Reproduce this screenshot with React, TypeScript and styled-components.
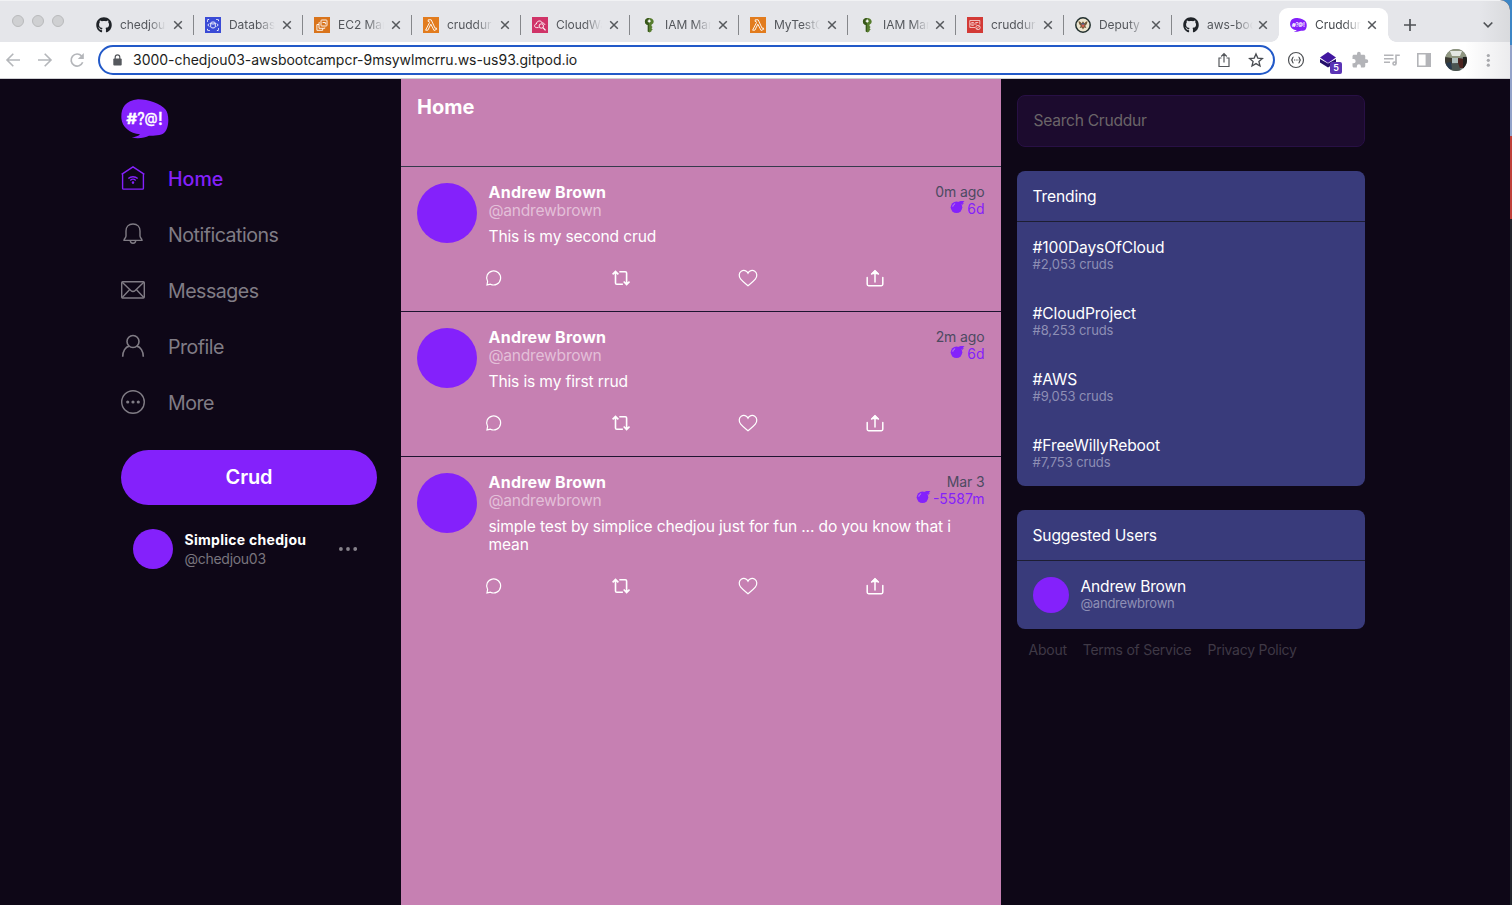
import React from "react";
import styled, { createGlobalStyle } from "styled-components";
import { FaGithub } from "react-icons/fa";

const purple = "#8421fb";

const GlobalStyle = createGlobalStyle`
  * { box-sizing: border-box; }
  html, body { margin: 0; padding: 0; }
  body {
    height: 905px;
    overflow: hidden;
    background: linear-gradient(#3c86c6 0 45px, #93a3c9 45px 136px, #c0413b 136px 219px, #23252d 219px);
    font-family: Inter, "Liberation Sans", sans-serif;
  }
  svg { display: block; flex: none; }
`;

const Window = styled.div`
  width: 1510px;
  height: 905px;
  display: flex;
  flex-direction: column;
  overflow: hidden;
  border-radius: 0 10px 0 0;
  background: #0e0717;
`;

/* ---------- browser chrome ---------- */

const TabStrip = styled.header`
  height: 42px;
  flex: none;
  display: flex;
  align-items: flex-end;
  border-top: 1px solid #f1f2f4;
  background: linear-gradient(90deg, #e5e6ea 1480px, #d9dadd 1510px);
`;

const Lights = styled.div`
  display: flex;
  gap: 8px;
  width: 85px;
  height: 41px;
  padding: 14px 0 0 12px;
`;

const Light = styled.span`
  width: 12px;
  height: 12px;
  border-radius: 50%;
  background: #cfd0d2;
  border: 1px solid #b9babc;
`;

const Tab = styled.div<{ $w: number; $active?: boolean; $sep?: boolean }>`
  position: relative;
  width: ${(p) => p.$w}px;
  height: 34px;
  padding: 0 11px;
  display: flex;
  align-items: center;
  color: ${(p) => (p.$active ? "#45494d" : "#54575c")};
  background: ${(p) => (p.$active ? "#fff" : "transparent")};
  border-radius: 9px 9px 0 0;

  &::after {
    content: "";
    display: ${(p) => (p.$sep ? "block" : "none")};
    position: absolute;
    right: 0;
    top: 7px;
    width: 1px;
    height: 20px;
    background: #85878b;
  }
`;

const TabFoot = styled.span<{ $side: "left" | "right" }>`
  position: absolute;
  bottom: 0;
  ${(p) => p.$side}: -8px;
  width: 8px;
  height: 8px;
  background: radial-gradient(circle at ${(p) => (p.$side === "left" ? "0 0" : "100% 0")}, transparent 7.5px, #fff 8px);
`;

const TabTitle = styled.span`
  width: 46px;
  margin: 0 auto 0 8px;
  white-space: nowrap;
  font-size: 12px;
  line-height: 18px;
  letter-spacing: -0.05px;
  mask-image: linear-gradient(90deg, #000 62%, transparent 100%);
`;

const StripButton = styled.span<{ $w: number }>`
  width: ${(p) => p.$w}px;
  height: 34px;
  display: flex;
  align-items: center;
  justify-content: center;
`;

const Spacer = styled.span`
  flex: 1;
`;

const Toolbar = styled.div`
  height: 37px;
  flex: none;
  display: flex;
  align-items: center;
  border-bottom: 1px solid #cfcfd3;
  background: linear-gradient(90deg, #fff 1465px, #ececee 1510px);
`;

const NavButtons = styled.div`
  width: 98px;
  padding-left: 5px;
  display: flex;
  gap: 16px;
`;

const Omnibox = styled.div`
  width: 1177px;
  height: 30px;
  padding: 0 9px 0 12.5px;
  display: flex;
  align-items: center;
  border: 2px solid #2259c8;
  border-radius: 15px;
  background: #fff;
`;

const Url = styled.span`
  margin-left: 11.5px;
  flex: 1;
  font-size: 14px;
  line-height: 20px;
  letter-spacing: -0.02px;
  color: #1d1e21;
`;

const OmniActions = styled.div`
  display: flex;
  gap: 16px;
`;

const Extensions = styled.div`
  margin-left: 12px;
  display: flex;
  align-items: center;
  gap: 14px;
`;

const Slot = styled.span`
  position: relative;
  width: 18px;
  height: 22px;
  display: flex;
  align-items: center;
  justify-content: center;
`;

const Count = styled.span`
  position: absolute;
  left: 11px;
  top: 13px;
  width: 12px;
  height: 12px;
  border-radius: 2px;
  background: #5b34b5;
  color: #fff;
  font-size: 9px;
  font-weight: 600;
  line-height: 12px;
  text-align: center;
`;

/* ---------- page ---------- */

const Page = styled.div`
  flex: 1;
  min-height: 0;
  display: flex;
`;

const Sidebar = styled.nav`
  width: 401px;
  padding: 20px 24px 0 121px;
`;

const NavList = styled.div`
  margin-top: 11px;
  display: flex;
  flex-direction: column;
`;

const NavItem = styled.a<{ $active?: boolean }>`
  height: 56px;
  display: flex;
  align-items: center;
  gap: 23px;
  color: ${(p) => (p.$active ? purple : "#807c85")};
`;

const NavLabel = styled.span<{ $active?: boolean }>`
  font-size: 19.6px;
  line-height: 24px;
  font-weight: ${(p) => (p.$active ? 500 : 400)};
  letter-spacing: ${(p) => (p.$active ? 0 : -0.5)}px;
  padding-top: 1px;
`;

const CrudButton = styled.button`
  display: block;
  width: 256px;
  height: 55px;
  margin-top: 20px;
  padding: 0;
  border: 0;
  border-radius: 28px;
  background: ${purple};
  color: #fff;
  font: 600 20px/55px Inter, sans-serif;
  letter-spacing: -0.15px;
`;

const Account = styled.div`
  margin-top: 24px;
  padding: 0 20px 0 12px;
  display: flex;
  align-items: center;
`;

const Avatar = styled.span<{ $size: number }>`
  flex: none;
  width: ${(p) => p.$size}px;
  height: ${(p) => p.$size}px;
  border-radius: 50%;
  background: ${purple};
`;

const AccountText = styled.div`
  flex: 1;
  margin-left: 11.5px;
  font-size: 14px;
  line-height: 19px;
`;

const AccountName = styled.div`
  font-weight: 700;
  letter-spacing: 0.28px;
  color: #fff;
`;

const AccountHandle = styled.div`
  letter-spacing: -0.28px;
  color: #79757e;
`;

const Feed = styled.main`
  width: 600px;
  background: #c680b2;
`;

const FeedHeader = styled.div`
  height: 88px;
  padding: 16px;
  border-bottom: 1px solid #343a4b;
  font-size: 20px;
  line-height: 24px;
  font-weight: 700;
  color: #fff;
`;

const Crud = styled.article<{ $last?: boolean }>`
  padding: 16px 16px 24px;
  display: flex;
  gap: 11.5px;
  border-bottom: ${(p) => (p.$last ? "0" : "1px solid #1d1430")};
`;

const CrudBody = styled.div`
  flex: 1;
  min-width: 0;
`;

const CrudHead = styled.div`
  display: flex;
  justify-content: space-between;
`;

const CrudName = styled.div`
  font-size: 16px;
  line-height: 18px;
  font-weight: 700;
  letter-spacing: 0.25px;
  color: #fff;
`;

const CrudHandle = styled.div`
  padding-top: 1px;
  font-size: 15.6px;
  line-height: 18px;
  letter-spacing: -0.24px;
  color: #e3bfd8;
`;

const Times = styled.div`
  display: flex;
  flex-direction: column;
  align-items: flex-end;
  padding-right: 0.5px;
  font-size: 14px;
  line-height: 17px;
  color: #4c4a61;
`;

const Ago = styled.span`
  letter-spacing: -0.12px;
`;

const Expires = styled.span`
  display: flex;
  gap: 2px;
  color: ${purple};
`;

const Message = styled.p`
  margin: 8px 0 23px;
  width: 480px;
  font-size: 15.6px;
  line-height: 18px;
  letter-spacing: -0.15px;
  color: #fff;
`;

const Actions = styled.div`
  height: 18px;
  margin-left: -4px;
  display: grid;
  grid-template-columns: repeat(4, 127px);
  align-items: center;
  color: #fff;
`;

const Rail = styled.aside`
  width: 380px;
  padding: 16px;
`;

const Search = styled.div`
  height: 52px;
  padding: 0 15.5px;
  border: 1px solid #281045;
  border-radius: 8px;
  background: #1c0b2e;
  color: #6b6568;
  font-size: 15.6px;
  line-height: 50px;
  letter-spacing: -0.27px;
`;

const Panel = styled.section`
  margin-top: 24px;
  border-radius: 8px;
  background: #393b7b;
`;

const PanelTitle = styled.div`
  padding: 17px 15.5px 15px;
  border-bottom: 1px solid #1d1e33;
  font-size: 15.6px;
  line-height: 18px;
  letter-spacing: -0.15px;
  color: #fff;
`;

const PanelRow = styled.div`
  padding: 16px 15.5px;
  display: flex;
  gap: 12px;
`;

const RowName = styled.div<{ $tight?: boolean }>`
  padding-top: 1px;
  font-size: 15.6px;
  line-height: 18px;
  letter-spacing: ${(p) => (p.$tight ? -0.2 : -0.12)}px;
  color: #fff;
`;

const RowNote = styled.div<{ $tight?: boolean }>`
  font-size: 13px;
  line-height: 14px;
  padding-bottom: 1px;
  letter-spacing: ${(p) => (p.$tight ? -0.22 : -0.1)}px;
  color: #8e8fb5;
`;

const Footer = styled.footer`
  margin-top: 12px;
  padding-left: 11.5px;
  display: flex;
  gap: 16px;
  font-size: 14px;
  line-height: 18px;
  letter-spacing: -0.25px;
  color: #3f3946;
`;

/* ---------- icons ---------- */

const CloseIcon = () => (
  <svg width="10" height="10" viewBox="0 0 10 10" stroke="#55585c" strokeWidth="1.5" fill="none">
    <path d="M1.2 1.2l7.6 7.6M8.8 1.2L1.2 8.8" />
  </svg>
);

const AwsTile = ({ kind }: { kind: "db" | "ec2" | "lambda" | "cw" | "list" }) => {
  const bg = { db: "#3a4bd6", ec2: "#d9741c", lambda: "#e27c1e", cw: "#d03468", list: "#d33a36" }[kind];
  return (
    <svg width="16" height="16" viewBox="0 0 16 16" fill="none" stroke="#fff" strokeWidth="0.9">
      <rect width="16" height="16" fill={bg} stroke="none" />
      {kind === "db" && (
        <>
          <path d="M2.5 4.8V2.5h2.3M11.2 2.5h2.3v2.3M13.5 11.2v2.3h-2.3M4.8 13.5H2.5v-2.3" strokeDasharray="1.6 .7" />
          <ellipse cx="8" cy="6" rx="2.3" ry="1" />
          <path d="M5.7 6v4c0 1.3 4.6 1.3 4.6 0V6M4.2 6.5L2.8 8l1.4 1.5M11.8 6.5L13.2 8l-1.4 1.5" />
        </>
      )}
      {kind === "ec2" && (
        <>
          <rect x="7" y="3" width="6" height="6" rx=".8" />
          <path d="M5.5 5.5H5v5.8h5.8v-.8M5 7.5H2.9v5.8h5.8v-2" />
          <path d="M8.6 5.5h2.8v1.8" />
        </>
      )}
      {kind === "lambda" && (
        <path d="M5.2 2.8h3l3.9 8.5 1.1-.4.5 1.4-2.6 1.2L7.8 7.2l-2.9 6H2.6l3.9-7.6-.4-1.1h-.9z" />
      )}
      {kind === "cw" && (
        <>
          <path d="M6.6 10.6H4.3c-2.5-.3-2.2-3.6.1-3.6.2-3.6 5-4.1 5.8-1 1.9.1 2.6.9 2.6 2" />
          <circle cx="9.3" cy="9" r="2.2" />
          <path d="M11 10.6l2.5 2.8" strokeWidth="1.2" />
        </>
      )}
      {kind === "list" && (
        <>
          <path d="M8 10.5H2.8V3.5h10v4M4.3 5.5h2.5M8.3 5.5h3M4.3 8.3h2.5M2.8 7h7" opacity=".75" />
          <circle cx="11" cy="10.5" r="2.2" opacity=".75" />
          <path d="M9.5 12l3-3" opacity=".75" />
        </>
      )}
    </svg>
  );
};

const KeyIcon = () => (
  <svg width="16" height="16" viewBox="0 0 16 16">
    <path d="M8 .9c2.8 0 4.7 1.6 4.7 3.7 0 1.5-.9 2.5-2.2 3.1v1.4l1.1 1-1.1 1.2 1.2 1.2-1.2.9v.9L8.7 15.400l-1.900-.9V7.900C5 7.400 3.900 6.200 3.900 4.500 3.900 2.300 5.600.9 8 .9z" fill="#567c2d" />
    <path d="M3.900 4.500C3.900 2.300 5.600.9 8 .9V15l-1.200-.5V7.900C5 7.400 3.900 6.200 3.900 4.500z" fill="#38571b" />
    <path d="M8.200 2.600v3M6.700 4.100h3" stroke="#fff" strokeWidth="1.300" />
  </svg>
);

const SealIcon = () => (
  <svg width="16" height="16" viewBox="0 0 16 16">
    <circle cx="8" cy="8" r="7.200" fill="#ece5cf" stroke="#22302f" strokeWidth="1.500" />
    <path d="M3.600 4.200c1.500.3 2.500 1.200 3 2.100L8 4.200l1.400 2.100c.5-.9 1.500-1.800 3-2.100 0 2.300-.9 3.800-2.200 4.600l1.200 2.300-2.200-.7L8 12.500l-1.200-2.100-2.200.7 1.200-2.300C4.500 8 3.600 6.500 3.600 4.200z" fill="#755a38" />
    <path d="M6.700 7h2.600v2.200L8 10.600 6.700 9.200z" fill="#d7604f" />
    <path d="M6.700 6.300h2.600v1.200H6.700z" fill="#3b5f9a" />
  </svg>
);

const Bubble = ({ w, h }: { w: number; h: number }) => (
  <svg width={w} height={h} viewBox="0 0 48 40" preserveAspectRatio="none">
    <path
      d="M17 .3C27 .2 40 4.800 44.500 10.500 48.500 15 48.300 29 43.500 33.500 40 37 33 36.500 28 36.800 24 38.500 17 40.500 10.800 38.300 14.500 37.800 17.500 37 19 35.200 9 34.500 1 28 .4 19.500-.2 10 3.500 1.500 17 .3z"
      fill={purple}
    />
    <g fill="#fff" stroke="#fff" strokeWidth=".3" fontFamily="Inter, sans-serif" fontWeight="500">
      <text x="5.400" y="24.600" fontSize="14" strokeWidth=".7" textLength="10.500" lengthAdjust="spacingAndGlyphs">#</text>
      <text x="16.200" y="26" fontSize="17" textLength="7.500" lengthAdjust="spacingAndGlyphs">?</text>
      <text x="23.400" y="24.300" fontSize="14" textLength="13" lengthAdjust="spacingAndGlyphs">@</text>
      <text x="36.700" y="26" fontSize="17">!</text>
    </g>
  </svg>
);

const BackIcon = ({ flip }: { flip?: boolean }) => (
  <svg width="16" height="16" viewBox="0 0 16 16" fill="none" stroke="#b4b6ba" strokeWidth="1.600" transform={flip ? "scale(-1 1)" : undefined}>
    <path d="M15 8H2M8.300 1.700L2 8l6.300 6.300" />
  </svg>
);

const ReloadIcon = () => (
  <svg width="16" height="16" viewBox="0 0 16 16" fill="none" stroke="#b4b6ba" strokeWidth="1.700">
    <path d="M13.700 10.300A6 6 0 1 1 12.600 4" />
    <path d="M14.800 1v6H8.800z" fill="#b4b6ba" stroke="none" />
  </svg>
);

const LockIcon = () => (
  <svg width="9" height="12" viewBox="0 0 9 12">
    <rect x=".3" y="4.500" width="8.400" height="7" rx="1" fill="#55585d" />
    <path d="M2.200 5V3.200a2.300 2.300 0 0 1 4.600 0V5" fill="none" stroke="#55585d" strokeWidth="1.200" />
  </svg>
);

const OmniShare = () => (
  <svg width="16" height="16" viewBox="0 0 16 16" fill="none" stroke="#55585c" strokeWidth="1.200">
    <path d="M5.500 6H3v8.500h10V6h-2.500M8 10.500V2M5.200 4.500L8 1.700l2.800 2.800" />
  </svg>
);

const StarIcon = () => (
  <svg width="16" height="16" viewBox="0 0 16 16" fill="none" stroke="#484b50" strokeWidth="1.300">
    <path d="M8 1.900l1.800 4.200 4.600.4-3.500 3 1.100 4.500-4-2.400-4 2.400 1.100-4.500-3.500-3 4.600-.4z" />
  </svg>
);

const BracesIcon = () => (
  <svg width="18" height="18" viewBox="0 0 18 18" fill="none" stroke="#4e5054" strokeWidth="1.200">
    <circle cx="9" cy="9" r="7.500" />
    <path d="M6.600 6c-1.500 0-.8 2.200-1.900 3 1.100.8.4 3 1.900 3M11.400 6c1.500 0 .8 2.200 1.900 3-1.100.8-.4 3-1.900 3" />
    <path d="M7 9h4.500" strokeDasharray="1 .7" />
  </svg>
);

const StackIcon = () => (
  <svg width="18" height="18" viewBox="0 0 18 18">
    <path d="M1 8l8 4.500L17 8v3.500L9 16.500l-8-5z" fill="#25106b" />
    <path d="M9 1l8 5.500-8 5.500-8-5.500z" fill="#4217a0" />
  </svg>
);

const PuzzleIcon = () => (
  <svg width="18" height="18" viewBox="0 0 24 24" fill="#b3b4b8">
    <path d="M20.500 11H19V7c0-1.100-.9-2-2-2h-4V3.500a2.500 2.500 0 0 0-5 0V5H4c-1.100 0-2 .9-2 2v3.800h1.500a2.700 2.700 0 0 1 0 5.400H2V20c0 1.100.9 2 2 2h3.800v-1.500a2.700 2.700 0 0 1 5.400 0V22H17c1.100 0 2-.9 2-2v-4h1.500a2.500 2.500 0 0 0 0-5z" />
  </svg>
);

const QueueIcon = () => (
  <svg width="18" height="18" viewBox="0 0 18 18" fill="none" stroke="#b3b4b8" strokeWidth="1.600">
    <path d="M1 4.200h9.500M1 7.700h9.500M1 11.200h6M13 12.500V4.200h3.800" />
    <circle cx="11.500" cy="12.500" r="1.500" />
  </svg>
);

const SidePanelIcon = () => (
  <svg width="18" height="18" viewBox="0 0 18 18">
    <path d="M2 2h14v14H2z" fill="#b3b4b8" />
    <path d="M3.600 3.600h7v10.800h-7z" fill="#fff" />
  </svg>
);

const ProfilePhoto = () => (
  <svg width="22" height="22" viewBox="0 0 22 22">
    <defs>
      <clipPath id="photo"><circle cx="11" cy="11" r="11" /></clipPath>
    </defs>
    <g clipPath="url(#photo)">
      <rect width="22" height="22" fill="#6d7473" />
      <path d="M0 0h22v7l-7 2-8 1-7-1z" fill="#8f9680" />
      <path d="M5 2h12l-2 5H7z" fill="#e3e7e2" />
      <path d="M0 8l7 1v7l-7 2z" fill="#3b3a33" />
      <path d="M7 9h6v5H7z" fill="#aebfbd" />
      <path d="M13 9l6 1v9h-6z" fill="#4c2520" />
      <path d="M18 8h4v12h-4z" fill="#20201d" />
      <path d="M3 15l10-1 3 8H5z" fill="#4a5450" />
      <path d="M1 14l5-1 1 7H3z" fill="#27394c" />
    </g>
  </svg>
);

const MenuDots = () => (
  <svg width="18" height="18" viewBox="0 0 18 18" fill="#a8a9ad">
    <circle cx="9.300" cy="4.500" r="1.600" />
    <circle cx="9.300" cy="9.300" r="1.600" />
    <circle cx="9.300" cy="14.200" r="1.600" />
  </svg>
);

const navBase = { width: 24, height: 24, viewBox: "0 0 24 24", fill: "none", stroke: "currentColor", strokeWidth: 1.4 } as const;

const HomeIcon = () => (
  <svg {...navBase}>
    <path d="M.6 8.300L12 .8l11.400 7.500M1.600 7.800v14.400c0 .5.400.9.900.9h19c.5 0 .9-.4.9-.9V7.800" />
    <path d="M7.300 12.600c2.600-2.500 6.800-2.500 9.400 0M9.300 14.400c1.500-1.400 3.900-1.400 5.400 0" />
    <circle cx="12" cy="16.600" r=".6" fill="currentColor" />
  </svg>
);

const BellIcon = () => (
  <svg {...navBase}>
    <path d="M12 2c-4.400 0-7 3-7 7v5.100c0 1.800-2 2.500-2 4.300h18c0-1.800-2-2.500-2-4.300V9c0-4-2.600-7-7-7zM9.300 18.600c0 3.600 5.400 3.600 5.400 0" />
  </svg>
);

const MailIcon = () => (
  <svg {...navBase}>
    <rect x=".7" y="3.700" width="22.600" height="16.300" rx="1" />
    <path d="M1.200 4.200l8.600 8.300c1.300 1.200 3.100 1.200 4.400 0l8.600-8.300M1.200 19.500l7.300-7.700M22.800 19.500l-7.300-7.700" />
  </svg>
);

const PersonIcon = () => (
  <svg {...navBase} strokeWidth={1.6}>
    <circle cx="12" cy="7.500" r="6" />
    <path d="M1.700 22.700c0-5.500 2.800-9.800 6.500-10.600M22.300 22.700c0-5.500-2.800-9.800-6.500-10.600" />
  </svg>
);

const MoreIcon = () => (
  <svg {...navBase}>
    <circle cx="12" cy="12" r="11.300" />
    <g fill="currentColor" stroke="none">
      <circle cx="6.700" cy="12" r="1.600" />
      <circle cx="12" cy="12" r="1.600" />
      <circle cx="17.300" cy="12" r="1.600" />
    </g>
  </svg>
);

const EllipsisIcon = () => (
  <svg width="18" height="6" viewBox="0 0 18 6" fill="#85818a">
    <circle cx="1.900" cy="3" r="1.900" />
    <circle cx="9" cy="3" r="1.900" />
    <circle cx="16.200" cy="3" r="1.900" />
  </svg>
);

const BombIcon = () => (
  <svg width="15" height="14" viewBox="0 0 15 14">
    <circle cx="6.500" cy="7.300" r="5.800" fill={purple} />
    <path d="M8 2.100c1.500-1.300 4-1.500 6.500-.9L13 2.400l1 1-1.500.4.300 1.500-2-1.200.8 3z" fill={purple} />
    <path d="M2.800 6.600c.2-1.500 1-2.400 2.300-2.800" stroke="#cf9be0" strokeWidth=".9" fill="none" />
  </svg>
);

const ReplyIcon = () => (
  <svg width="18" height="18" viewBox="0 0 18 18" fill="none" stroke="currentColor" strokeWidth="1.200">
    <path d="M2 15.900l.6-3.400A7 7 0 1 1 5.500 15.200z" />
  </svg>
);

const RepostIcon = () => (
  <svg width="18" height="18" viewBox="0 0 18 18" fill="none" stroke="currentColor" strokeWidth="1.600">
    <path d="M3.500 2.600v11.300c0 .8.500 1.300 1.300 1.300h6.100M.6 5.400l2.900-3 2.900 3M7.300 2.800h6c.8 0 1.300.5 1.300 1.300v11.300M11.700 12.500l2.900 3 2.900-3" />
  </svg>
);

const HeartIcon = () => (
  <svg width="18" height="18" viewBox="1 0 18 18" fill="none" stroke="currentColor" strokeWidth="1.200" overflow="visible">
    <path d="M10 16.700C7.500 14.600 4.600 12.400 2.700 10.100.5 7.400.8 3.800 3.200 2.200 5.700.7 8.700 1.600 10 4.100c1.300-2.500 4.300-3.400 6.800-1.900 2.400 1.600 2.700 5.200.5 7.900-1.900 2.300-4.800 4.500-7.300 6.600z" />
  </svg>
);

const ShareIcon = () => (
  <svg width="18" height="18" viewBox="0 0 18 18" fill="none" stroke="currentColor" strokeWidth="1.500">
    <path d="M1.200 8.400v6.900c0 .9.500 1.400 1.400 1.400h12.800c.9 0 1.400-.5 1.400-1.400V8.400M9 13V2.500M5.700 5L9 1.700 12.300 5" strokeLinecap="round" />
    <path d="M6.500 4.500L9 2l2.500 2.500z" fill="currentColor" />
  </svg>
);

/* ---------- data ---------- */

const tabs: { title: string; icon: React.ReactNode; w: number }[] = [
  { title: "chedjou", icon: <FaGithub size={16} color="#1f2328" />, w: 109 },
  { title: "Databas", icon: <AwsTile kind="db" />, w: 109 },
  { title: "EC2 Mar", icon: <AwsTile kind="ec2" />, w: 109 },
  { title: "cruddur", icon: <AwsTile kind="lambda" />, w: 109 },
  { title: "CloudWa", icon: <AwsTile kind="cw" />, w: 109 },
  { title: "IAM Mar", icon: <KeyIcon />, w: 109 },
  { title: "MyTestC", icon: <AwsTile kind="lambda" />, w: 109 },
  { title: "IAM Mar", icon: <KeyIcon />, w: 108 },
  { title: "cruddur", icon: <AwsTile kind="list" />, w: 108 },
  { title: "Deputy", icon: <SealIcon />, w: 108 },
  { title: "aws-boo", icon: <FaGithub size={16} color="#1f2328" />, w: 107 },
];

const navItems = [
  { label: "Home", icon: <HomeIcon /> },
  { label: "Notifications", icon: <BellIcon /> },
  { label: "Messages", icon: <MailIcon /> },
  { label: "Profile", icon: <PersonIcon /> },
  { label: "More", icon: <MoreIcon /> },
];

const cruds = [
  { text: "This is my second crud", ago: "0m ago", left: "6d" },
  { text: "This is my first rrud", ago: "2m ago", left: "6d" },
  { text: "simple test by simplice chedjou just for fun ... do you know that i mean", ago: "Mar 3", left: "-5587m" },
];

const trends = [
  ["#100DaysOfCloud", "#2,053 cruds"],
  ["#CloudProject", "#8,253 cruds"],
  ["#AWS", "#9,053 cruds"],
  ["#FreeWillyReboot", "#7,753 cruds"],
];

export default function App() {
  return (
    <>
      <GlobalStyle />
      <Window>
        <TabStrip>
          <Lights><Light /><Light /><Light /></Lights>
          {tabs.map((t, i) => (
            <Tab key={i} $w={t.w} $sep={i < tabs.length - 1}>
              {t.icon}
              <TabTitle>{t.title}</TabTitle>
              <CloseIcon />
            </Tab>
          ))}
          <Tab $w={109} $active>
            <TabFoot $side="left" />
            <Bubble w={17} h={14} />
            <TabTitle>Cruddur</TabTitle>
            <CloseIcon />
            <TabFoot $side="right" />
          </Tab>
          <StripButton $w={44}>
            <svg width="12" height="12" viewBox="0 0 12 12" stroke="#4f5256" strokeWidth="1.700"><path d="M6 0v12M0 6h12" /></svg>
          </StripButton>
          <Spacer />
          <StripButton $w={44}>
            <svg width="10" height="8" viewBox="0 0 10 8" fill="none" stroke="#4f5256" strokeWidth="1.700"><path d="M.7 1.500L5 5.800l4.300-4.300" /></svg>
          </StripButton>
        </TabStrip>
        <Toolbar>
          <NavButtons><BackIcon /><BackIcon flip /><ReloadIcon /></NavButtons>
          <Omnibox>
            <LockIcon />
            <Url>3000-chedjou03-awsbootcampcr-9msywlmcrru.ws-us93.gitpod.io</Url>
            <OmniActions><OmniShare /><StarIcon /></OmniActions>
          </Omnibox>
          <Extensions>
            <Slot><BracesIcon /></Slot>
            <Slot><StackIcon /><Count>5</Count></Slot>
            <Slot><PuzzleIcon /></Slot>
            <Slot><QueueIcon /></Slot>
            <Slot><SidePanelIcon /></Slot>
            <Slot><ProfilePhoto /></Slot>
            <Slot><MenuDots /></Slot>
          </Extensions>
        </Toolbar>
        <Page>
          <Sidebar>
            <Bubble w={48} h={40} />
            <NavList>
              {navItems.map((n, i) => (
                <NavItem key={n.label} $active={i === 0}>
                  {n.icon}
                  <NavLabel $active={i === 0}>{n.label}</NavLabel>
                </NavItem>
              ))}
            </NavList>
            <CrudButton>Crud</CrudButton>
            <Account>
              <Avatar $size={40} />
              <AccountText>
                <AccountName>Simplice chedjou</AccountName>
                <AccountHandle>@chedjou03</AccountHandle>
              </AccountText>
              <EllipsisIcon />
            </Account>
          </Sidebar>
          <Feed>
            <FeedHeader>Home</FeedHeader>
            {cruds.map((c, i) => (
              <Crud key={i} $last={i === cruds.length - 1}>
                <Avatar $size={60} />
                <CrudBody>
                  <CrudHead>
                    <div>
                      <CrudName>Andrew Brown</CrudName>
                      <CrudHandle>@andrewbrown</CrudHandle>
                    </div>
                    <Times>
                      <Ago>{c.ago}</Ago>
                      <Expires><BombIcon />{c.left}</Expires>
                    </Times>
                  </CrudHead>
                  <Message>{c.text}</Message>
                  <Actions><ReplyIcon /><RepostIcon /><HeartIcon /><ShareIcon /></Actions>
                </CrudBody>
              </Crud>
            ))}
          </Feed>
          <Rail>
            <Search>Search Cruddur</Search>
            <Panel>
              <PanelTitle>Trending</PanelTitle>
              {trends.map(([tag, note]) => (
                <PanelRow key={tag}>
                  <div>
                    <RowName>{tag}</RowName>
                    <RowNote>{note}</RowNote>
                  </div>
                </PanelRow>
              ))}
            </Panel>
            <Panel>
              <PanelTitle>Suggested Users</PanelTitle>
              <PanelRow>
                <Avatar $size={36} />
                <div>
                  <RowName $tight>Andrew Brown</RowName>
                  <RowNote $tight>@andrewbrown</RowNote>
                </div>
              </PanelRow>
            </Panel>
            <Footer><span>About</span><span>Terms of Service</span><span>Privacy Policy</span></Footer>
          </Rail>
        </Page>
      </Window>
    </>
  );
}
